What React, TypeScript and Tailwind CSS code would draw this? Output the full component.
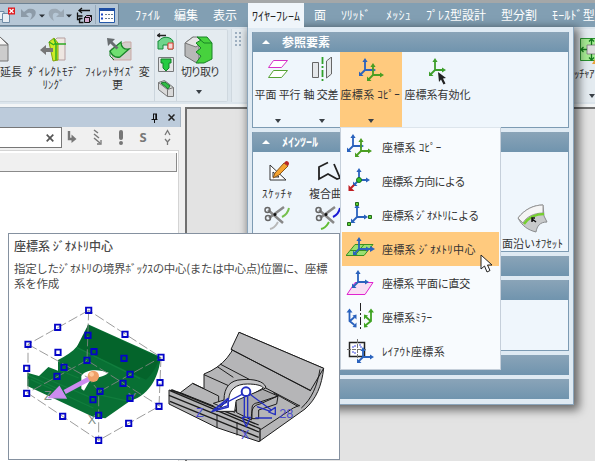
import React from "react";

/** Text run stretched to a target advance width through letter spacing. */
function T({ s, w, fs = 12, lh = "leading-[16px]", className = "" }: { s: string; w: number; fs?: number; lh?: string; className?: string }) {
  const chars = Array.from(s);
  const natural = chars.reduce((sum, c) => {
    if (c === " ") return sum + fs * 0.224;
    if (c === "(" || c === ")") return sum + fs * 0.34;
    const code = c.charCodeAt(0);
    return sum + (code >= 0xff61 && code <= 0xff9f ? fs * 0.5 : fs);
  }, 0);
  return (
    <span
      className={"whitespace-pre block " + lh + " " + className}
      style={{ fontSize: fs, width: w + 1, letterSpacing: (w - natural) / chars.length }}
    >
      {s}
    </span>
  );
}

const Caret = ({ className = "" }: { className?: string }) => (
  <svg width="6" height="4" viewBox="0 0 6 4" className={className}>
    <path d="M0 0h6L3 4z" fill="#3a4046" />
  </svg>
);

function Axes({ x, y, c = "#2a62bd", diag = c, up = 12 }: { x: number; y: number; c?: string; diag?: string; up?: number }) {
  return (
    <g transform={`translate(${x} ${y})`} fill="none" strokeWidth="1.8">
      <path d="M0 0L-5 5" stroke={diag} />
      <path d="M-6 6v-4.500l4.500 4.500z" fill={diag} />
      <path d={`M0 .9V${-up + 2}M-.9 0H9`} stroke={c} />
      <path d={`M0 ${-up}l-2.600 4h5.200zM11 0l-4-2.600v5.200z`} fill={c} />
    </g>
  );
}

const CopyAxes = () => (
  <svg width="26" height="26" viewBox="0 0 26 26">
    <Axes x={7} y={13} />
    <Axes x={15} y={18} c="#4a9e22" />
  </svg>
);

function Header({ title, w }: { title?: string; w?: number }) {
  return (
    <div className="h-[20px] shrink-0 flex items-center pl-[9px] bg-linear-to-b from-[#8aa4b8] to-[#7094ae] text-white font-bold">
      {title && (
        <>
          <svg width="8" height="4" viewBox="0 0 8 4" className="mr-[12px]">
            <path d="M0 4L4 0l4 4z" fill="#fff" />
          </svg>
          <T s={title} w={w!} />
        </>
      )}
    </div>
  );
}

function TitleBar() {
  return (
    <div className="h-[24px] bg-[#829fb3] flex items-center">
      <div className="w-[119px] h-[23px] -mt-px bg-[#b6c7d6] border border-l-0 border-[#6d8294] rounded-r-[2px] shrink-0">
        <svg width="118" height="21" viewBox="0 4 118 21">
          <g fill="#e8eef4" stroke="#6e8ba5">
            <path d="M-2 11.500h6v8h-6z" />
            <path d="M2.500 13.500h7v9h-7z" />
          </g>
          <rect x="8" y="7.500" width="7" height="7" fill="#e0191d" />
          <path d="M9.500 9l4 4m0-4l-4 4" stroke="#fff" strokeWidth="1.300" />
          <path d="M21 9v8h8l-3-3c5-3 8 0 4 6 8-4 8-13-2-11l-4 3z" fill="#8d9ba8" />
          <path d="M64 9v8h-8l3-3c-5-3-8 0-5 7-8-5-7-14 3-12l4 3z" fill="#9ba8b4" />
          <path d="M39 14.500h6l-3 3zM66 14.500h6l-3 3z" fill="#2c3238" />
          <g stroke="#111" fill="none">
            <path d="M79 10.500h11M82 8l-3 2.500 3 2.500M77.500 12.500v7h3M77.500 16h5M82.500 18.500h-3v4h4" strokeWidth="1.300" />
            <path d="M84.500 17.500l2-2h5v5l-2 2h-5z" fill="#d5a9cf" />
            <path d="M84.500 17.500h5v5m0-5l2-2" />
          </g>
          <path d="M95.500 5v19" stroke="#97a9ba" />
          <path d="M99.500 8.500h15v14h-15z" fill="#fff" stroke="#2358a8" />
          <path d="M99 8h16v3h-16z" fill="#1e4da2" />
          <path d="M101 14.500h2m-2 4h2" stroke="#1d49c8" strokeWidth="2" />
          <path d="M105 14.500h8m-8 4h8" stroke="#6b7d91" strokeDasharray="2 1" />
        </svg>
      </div>
      <div className="flex items-center text-white h-full pl-[16px]">
        <T s="ﾌｧｲﾙ" w={25} className="mr-[13px]" />
        <T s="編集" w={24} className="mr-[14px]" />
        <T s="表示" w={24} className="mr-[10px]" />
        <div className="w-[56px] h-full shrink-0 mr-[10px]" />
        <T s="面" w={12} className="mr-[14px]" />
        <T s="ｿﾘｯﾄﾞ" w={29} className="mr-[15px]" />
        <T s="ﾒｯｼｭ" w={25} className="mr-[14px]" />
        <T s="ﾌﾟﾚｽ型設計" w={60} className="mr-[14px]" />
        <T s="型分割" w={36} className="mr-[14px]" />
        <T s="ﾓｰﾙﾄﾞ型" w={43} />
      </div>
    </div>
  );
}

function Ribbon() {
  return (
    <div className="h-[77px] bg-[#dce5ec] flex pt-[2px] text-[#333]">
      <div className="w-[228px] h-[73px] border border-l-0 border-[#cfd8df] rounded-r-[2px] bg-[#e4ebf0] flex shrink-0">
        <div className="w-[26px] pt-[5px]">
          <svg width="12" height="30" viewBox="0 0 12 30">
            <path d="M-6 10L0 2l8 7v17h-14z" fill="#ccc" stroke="#777" />
            <path d="M-6 10h14L0 2z" fill="#f6f6f6" stroke="#777" />
          </svg>
          <T s="延長" w={22} fs={11} lh="leading-[13px]" />
        </div>
        <div className="w-[56px] flex flex-col items-center pt-[6px]">
          <svg width="28" height="28" viewBox="0 0 28 28">
            <path d="M12 7l5-5h8v22h-8z" fill="#eee6e1" stroke="#b59fa0" />
            <path d="M9 6l5-4 4 5v17l-5 1z" fill="#cdec27" stroke="#83a30e" />
            <path d="M14 3l2 5v16M14 8h12M9 6l5 3" stroke="#2bab22" fill="none" strokeWidth="1.400" />
            <path d="M0 14l6-5v3h7v4H6v3z" fill="#777" />
          </svg>
          <T s="ﾀﾞｲﾚｸﾄﾓﾃﾞ" w={52} fs={11} lh="leading-[13px]" className="mt-px" />
          <T s="ﾘﾝｸﾞ" w={22} fs={11} lh="leading-[13px]" />
        </div>
        <div className="w-[72px] flex flex-col items-center pt-[6px]">
          <svg width="28" height="28" viewBox="0 0 28 28">
            <path d="M7 13l14-7h6v18H9z" fill="#d4cecc" stroke="#c9a9a5" />
            <path d="M6 15l11-9c0 5 3 8 8 7l-9 8c-5 1-8-1-10-6z" fill="#70df70" stroke="#188327" strokeWidth="1.300" />
            <path d="M6 15v5l4 4" stroke="#188327" fill="none" />
            <path d="M3 2l8 1-2.500 2.500 6 6-2 2-6-6L4 10z" fill="#686d70" />
          </svg>
          <T s="ﾌｨﾚｯﾄｻｲｽﾞ 変" w={65} fs={11} lh="leading-[13px]" className="mt-px" />
          <T s="更" w={11} fs={11} lh="leading-[13px]" />
        </div>
        <div className="w-[23px] border-x border-[#cbd5dd] pt-[3px] flex flex-col items-center">
          <svg width="18" height="66" viewBox="0 0 18 66" fill="none">
            <path d="M2 8c3-5 11-5 14 0v8h-5v-4H6v4H1V8z" fill="#6fd48b" stroke="#168a39" />
            <path d="M11 10h5v6h-5z" fill="#f3d9d6" stroke="#e43b34" />
            <path d="M1 2.500h8M3 .5l-2.500 2L3 4" stroke="#222" strokeWidth="1.300" />
            <path d="M1.500 24.500h15v14h-15z" fill="#e5e6e7" stroke="#77797b" />
            <path d="M4 26h10v4h-2v5l-3 3-3-3v-5H4z" fill="#25cc42" stroke="#128128" />
            <path d="M1.500 49.500l6-2 9 7v9h-6l-9-7z" fill="#d9d9d9" stroke="#777" />
            <path d="M4 50l4-1 5 4-2 3z" fill="#31bf44" stroke="#177529" />
            <path d="M1.500 49.500l9 7v7m0-7l6-2" stroke="#777" />
          </svg>
        </div>
        <div className="w-[49px] flex flex-col items-center pt-[6px] pr-[5px]">
          <svg width="30" height="28" viewBox="0 0 30 28">
            <path d="M1 7l8-6 6 4v22l-4-1L1 20z" fill="#b8b8b8" stroke="#6f7172" />
            <path d="M1 7l11 4 8-6-7-4H9z" fill="#e4e4e4" stroke="#777" />
            <path d="M13 1h10l5 6v16l-8 4h-8l5-7-5-4 5-4-5-5 5-3z" fill="#47d23d" stroke="#188327" />
            <path d="M13 1l7 6h8" stroke="#188327" fill="none" />
          </svg>
          <T s="切り取り" w={38} fs={11} lh="leading-[13px]" className="mt-px ml-[3px]" />
          <Caret className="mt-[12px]" />
        </div>
      </div>
      <div className="w-[20px] h-[73px] ml-[3px] bg-[#e4ebf0] border-l border-[#cfd8df] shrink-0">
        <svg width="14" height="20" viewBox="0 0 14 20" fill="#9fb0c1">
          {[3, 7, 11, 15].map((y) => (
            <path key={y} d={`M3 ${y}h2v2h-2zM7 ${y}h2v2h-2z`} />
          ))}
        </svg>
      </div>
      <div className="grow bg-[#e4ebf0] h-[73px] flex flex-col items-end pt-[9px] overflow-hidden">
        <svg width="15" height="27" viewBox="0 0 15 27">
          <path d="M.5.500H20v22H.500z" fill="#a6eb93" stroke="#2a922f" />
          <path d="M7 7h10v9H7z" fill="#ddd" stroke="#888" />
          <path d="M1 11.500h6M3.500 9L1 11.500 3.500 14M11.500 1v6M9 3.500L11.500 1 14 3.500M11.500 16v6M9 19.500l2.500 2.500 2.500-2.500" stroke="#167a1d" fill="none" strokeWidth="1.300" />
          <path d="M12 26l3-5v5z" fill="#e8a13a" />
        </svg>
        <T s="ｯﾁｬｱ" w={20} fs={11} lh="leading-[13px]" className="mt-[2px]" />
        <Caret className="mt-[14px]" />
      </div>
    </div>
  );
}

function SidePanel() {
  return (
    <div className="w-[181px] flex flex-col shrink-0">
      <div className="h-[20px] bg-[#bccbdb] border-t border-r border-[#a6b4c2] flex items-center justify-end pr-[5px] gap-[9px]">
        <svg width="8" height="10" viewBox="0 0 8 10" fill="none" stroke="#111">
          <path d="M2 1h4M2.500 1v5M5.500 1v5M4.800 1v5M.5 6.500h6M3.500 7v3" />
        </svg>
        <svg width="7" height="7" viewBox="0 0 7 7" stroke="#222" strokeWidth="1.500">
          <path d="M.5.500l6 6m0-6l-6 6" />
        </svg>
      </div>
      <div className="h-[23px] flex items-start">
        <div className="w-[62px] h-[21px] bg-white border border-l-0 border-[#777] flex items-center justify-end pr-[7px]">
          <svg width="8" height="8" viewBox="0 0 8 8" stroke="#555" strokeWidth="1.700">
            <path d="M.7.700l6.600 6.600m0-6.600L.7 7.300" />
          </svg>
        </div>
        <svg width="118" height="22" viewBox="62 127 118 22" fill="none" stroke="#777" strokeWidth="2">
          <path d="M69 131v8h4" strokeWidth="2.400" />
          <path d="M71.500 134.500l5 4.500-5 4z" fill="#777" stroke="none" />
          <path d="M94 130l4 3m-4 1l5 4m-5 0l6 5" strokeWidth="1.500" />
          <path d="M97 144h4v-4" strokeWidth="1.300" />
          <path d="M121 132v6" strokeWidth="4" strokeLinecap="round" />
          <circle cx="121" cy="143" r="1" />
          <path d="M165 135l2.500-4.500 2.500 4.500M165 139l2.500 3 2.500-3M167.500 141v4" strokeWidth="1.300" />
          <text x="139.500" y="142" fontSize="13" fontWeight="bold" fill="#777" stroke="none" fontFamily="Open Sans">S</text>
        </svg>
      </div>
      <div className="grow w-[179px] bg-white border-t border-r border-[#d4d4d4] pt-[2px]">
        <div className="w-[177px] h-[19px] bg-[#f0f0f0] border-r border-b border-[#8a8a8a]" />
      </div>
    </div>
  );
}

function Tool({ icon, label, w, caret, className = "" }: { icon: React.ReactNode; label: string; w: number; caret?: boolean; className?: string }) {
  return (
    <div className={"flex flex-col items-center h-full pt-[5px] shrink-0 " + className}>
      <div className="h-[29px]">{icon}</div>
      <T s={label} w={w} fs={11} />
      {caret && <Caret className="mt-[17px]" />}
    </div>
  );
}

const Scissors = ({ a, b }: { a: string; b: string }) => (
  <svg width="28" height="26" viewBox="0 0 28 26" fill="none">
    <path d="M6 24c5-1 6-4 8-7" stroke={a} strokeWidth="2" />
    <path d="M18 12c4-2 6-4 7-9" stroke={b} strokeWidth="2" />
    <path d="M4 5l15 13M20 2L5 13" stroke="#888" strokeWidth="2.500" />
    <circle cx="3.500" cy="5" r="2.500" stroke="#666" strokeWidth="1.500" />
    <circle cx="4" cy="13" r="2.500" stroke="#666" strokeWidth="1.500" />
    <circle cx="11" cy="9.500" r="1.500" fill="#111" />
  </svg>
);

function Popup() {
  return (
    <div className="absolute left-[247px] top-[27px] w-[327px] h-[378px] bg-[#dfeaf3] border border-t-0 border-[#8ba5bb] shadow-[3px_3px_9px_2px_rgba(0,0,0,0.55)] px-[4px] pt-[5px] flex flex-col text-[#333]">
      <div className="h-[96px] border border-t-0 border-[#7d9bb3] bg-[#eff6fc] flex flex-col">
        <Header title="参照要素" w={48} />
        <div className="flex grow">
          <Tool
            caret
            label="平面 平行"
            w={46}
            className="w-[50px]"
            icon={
              <svg width="24" height="24" viewBox="0 0 24 24" fill="#fff">
                <path d="M7.500 3.500h14l-6 7h-13z" stroke="#d630c8" />
                <path d="M7.500 13.500h14l-6 7h-13z" stroke="#55a233" />
              </svg>
            }
          />
          <Tool
            caret
            label="軸 交差"
            w={35}
            className="w-[37px]"
            icon={
              <svg width="24" height="26" viewBox="0 0 24 26" fill="#e4e7ea" stroke="#666">
                <path d="M2.500 5.500h6v15h-6zM16.500 4l5-4v17l-5 4z" />
                <path d="M12.500 0v24" stroke="#31a029" strokeWidth="1.800" strokeDasharray="7 2 2 2" />
              </svg>
            }
          />
          <Tool caret label="座標系 ｺﾋﾟｰ" w={60} className="w-[62px] bg-[#ffca7e]" icon={<CopyAxes />} />
          <Tool
            label="座標系有効化"
            w={66}
            className="w-[72px]"
            icon={
              <svg width="28" height="28" viewBox="0 0 28 28">
                <Axes x={11} y={13} c="#3d9e2b" />
                <path d="M14 15l8 6-3 .5 2.500 5-2 1-2.500-5-2 2.500z" fill="#222" />
              </svg>
            }
          />
        </div>
      </div>
      <div className="h-[120px] mt-[4px] border border-t-0 border-[#7d9bb3] bg-[#eff6fc] shrink-0 flex flex-col">
        <Header title="ﾒｲﾝﾂｰﾙ" w={36} />
        <div className="flex grow pt-[5px]">
          <div className="w-[50px] flex flex-col items-center pt-[3px]">
            <svg width="24" height="25" viewBox="0 0 24 25" className="shrink-0">
              <path d="M4 5v15h16z" fill="#fff" stroke="#333" />
              <path d="M7 12v5h6z" fill="none" stroke="#333" />
              <path d="M7 18l2-5L18 3l4 3-9 9z" fill="#f5a430" stroke="#8b561c" />
              <path d="M18 3l2-2q3 0 3 3l-1 2z" fill="#b92525" />
            </svg>
            <T s="ｽｹｯﾁｬ" w={31} fs={11} />
            <div className="mt-[4px]"><Scissors a="#b8b8b8" b="#76c04d" /></div>
          </div>
          <div className="w-[52px] flex flex-col items-center pt-[3px]">
            <svg width="26" height="25" viewBox="0 0 26 25" className="shrink-0">
              <path d="M12 2.500L3 7v12l9-5 9 5 3-1-6-14" fill="none" stroke="#222" strokeWidth="1.800" />
            </svg>
            <T s="複合曲線" w={44} fs={11} className="ml-[5px]" />
            <div className="mt-[4px]"><Scissors a="#61bd35" b="#1a1ad6" /></div>
          </div>
          <div className="grow" />
          <div className="w-[67px] flex flex-col items-center pt-[47px] pr-[3px]">
            <svg width="32" height="30" viewBox="0 0 32 30" className="shrink-0">
              <path d="M1 14C8 5 17 1 26 1l1 11 3 6c-7 0-10 4-11 10C11 26 5 22 1 14z" fill="#c8cacb" stroke="#898b8d" />
              <path d="M1 14C8 5 17 1 26 1v8C17 9 9 13 6 19z" fill="#f5f5f5" stroke="#999" />
              <path d="M7 20c5-7 11-10 20-10" stroke="#75cf2f" strokeWidth="2.500" fill="none" />
              <path d="M19 18l-4-3m0 3v-4h3" stroke="#111" strokeWidth="1.500" fill="none" />
            </svg>
            <T s="面沿いｵﾌｾｯﾄ" w={61} fs={11} className="mt-[1px]" />
          </div>
        </div>
      </div>
      <div className="mt-[4px] shrink-0"><Header /></div>
      <div className="mt-[4px] h-[71px] border border-t-0 border-[#7d9bb3] bg-[#eff6fc] shrink-0"><Header /></div>
      <div className="mt-[4px] shrink-0"><Header /></div>
      <div className="mt-[4px] shrink-0"><Header /></div>
    </div>
  );
}

const Node = ({ x, y }: { x: number; y: number }) => (
  <path d={`M${x - 1.5} ${y - 1.5}h3v3h-3z`} fill="#5ed136" stroke="#226b1b" />
);

const menu: { label: string; w: number; icon: React.ReactNode; on?: boolean }[] = [
  { label: "座標系 ｺﾋﾟｰ", w: 60, icon: <><Axes x={7} y={13} /><Axes x={15} y={18} c="#4a9e22" up={13} /></> },
  { label: "座標系 方向による", w: 83, icon: <><Axes x={13} y={13} diag="#2a62bd" /><path d="M8 18l-3 3" stroke="#c01e23" strokeWidth="2" /><path d="M2.500 24v-6l6 6z" fill="#c01e23" /><circle cx="13" cy="13" r="2.500" fill="#35c42e" stroke="#16701a" /></> },
  { label: "座標系 ｼﾞｵﾒﾄﾘによる", w: 97, icon: <><Axes x={11} y={16} up={13} /><Node x={11} y={3} /><Node x={24} y={16} /><Node x={3} y={23} /></> },
  { label: "座標系 ｼﾞｵﾒﾄﾘ中心", w: 94, on: true, icon: <><path d="M9 9.500h18l-9 11H0z" fill="#9be070" stroke="#3b8f20" /><path d="M4 15.500h18M18 9.500l-9 11" stroke="#3b8f20" /><Axes x={13} y={14} up={12} /><path d="M22 14h3" stroke="#2a62bd" strokeWidth="2" /><path d="M24 11l5 3-5 3z" fill="#2a62bd" /></> },
  { label: "座標系 平面に直交", w: 88, icon: <><path d="M9 13.500h18l-8 12H1z" fill="#f8def3" stroke="#e023cf" /><Axes x={12} y={13} /></> },
  { label: "座標系ﾐﾗｰ", w: 50, icon: <><path d="M14.500 0v28" stroke="#222" strokeDasharray="8 2 2 2" /><path d="M3.500 8v10l5 4M4 18l4.500-4" stroke="#2a62bd" strokeWidth="1.800" fill="none" /><path d="M.5 9.500l3-4 3 4zM10.500 11.500v5l-4-4zM10.500 24.500v-5l-4 4.500z" fill="#2a62bd" /><path d="M25 8v10l-5 4m4.500-4l-4.500-4" stroke="#3fa322" strokeWidth="1.800" fill="none" /><path d="M28 9.500l-3-4-3 4zM18 11.500v5l4-4zM18 24.500v-5l4 4.500z" fill="#3fa322" /></> },
  { label: "ﾚｲｱｳﾄ座標系", w: 63, icon: <><path d="M3.500 5.500h15v14h-15z" fill="#fff" stroke="#222" strokeWidth="1.500" /><path d="M1 12.500h20M11.500 2v20" stroke="#777" strokeDasharray="4 1" /><path d="M6 10h3V7m5 0v3h3M6 15h3v3" stroke="#3e4ae0" fill="none" strokeDasharray="2 1" /><Axes x={17} y={20} up={10} /></> },
];

function Menu() {
  return (
    <div className="absolute left-[340px] top-[127px] w-[161px] h-[243px] bg-[#f8fbfe] border border-[#c5cfda] border-t-[#dde5ec] px-px pt-[2px] text-[#333]">
      {menu.map((m) => (
        <div key={m.label} className={"h-[34px] flex items-center pl-[4px] pb-px " + (m.on ? "bg-[#ffca7e]" : "")}>
          <svg width="29" height="28" viewBox="0 0 29 28" className="mr-[7px] shrink-0">{m.icon}</svg>
          <T s={m.label} w={m.w} fs={11} />
        </div>
      ))}
    </div>
  );
}

const handles = [
  [206, 31], [113, 82], [24, 133], [20, 205], [20, 280], [128, 349], [236, 421], [326, 370], [417, 319], [420, 248], [423, 172], [315, 103],
  [204, 106], [114, 157], [222, 155], [201, 181], [132, 202], [111, 229], [312, 175], [330, 223], [309, 250], [330, 295], [240, 274], [219, 299], [236, 346],
];

const PartsArt = () => (
  <svg width="331" height="159" viewBox="27 900 993 477" fill="none">
    <g transform="translate(60 900)">
      <path d="M204 73l218 98c-4 50-27 112-92 132l-74 52-36-4L22 258v-40l35 10 28-27 29 11v-32c47-21 78-55 90-107z" fill="#087034" />
      <path d="M204 75l214 98c-7 24-20 48-40 66L170 142z" fill="#04642b" />
      <path d="M24 226l88 40m-80-28l188 86M60 228l160 68m-104-86l60 24m60 50l90 20M170 142l190 94" stroke="#117d3d" strokeWidth="4" />
      <path d="M184 228c10-20 52-22 82-10-10 8-18 10-24 12l-30 8-20 34-8-6z" fill="#fff" />
      <path d="M206 31L24 133v147l212 141 181-102 6-147zM24 133l180 100 32 40v148M206 31l-5 150 219 138M201 181L20 280M240 274l183-102" stroke="#888" strokeWidth="2.500" strokeDasharray="30 9" />
      <g fill="#7c8c86" fontFamily="Liberation Sans" fontSize="38">
        <text x="72" y="299">Z</text>
        <text x="203" y="371">X</text>
        <text x="324" y="306" fill="#77a">Y</text>
      </g>
      <path d="M214 233l-80 43" stroke="#cc8cf0" strokeWidth="14" />
      <path d="M86 293l32-33 20 34z" fill="#cc8cf0" stroke="#cc8cf0" strokeWidth="4" />
      <circle cx="220" cy="229" r="17" fill="#f0a068" />
      <circle cx="215" cy="223" r="7" fill="#ffc99b" />
      {handles.map(([x, y]) => (
        <path key={`${x}-${y}`} d={`M${x - 8} ${y - 8}h16v16h-16z`} stroke="#0404c8" strokeWidth="5.500" />
      ))}
    </g>
    <g transform="translate(480 960)" stroke="#1c1c1c" strokeWidth="3" strokeLinejoin="round">
      <path d="M237 37l254 108c-6 52-22 92-56 122L297 365l-126-42L27 252v-42l34 8 37-28 34 16v-44c58-22 92-66 105-125z" fill="#b5b5b7" />
      <path d="M237 37l254 108-40 67L213 88z" fill="#bababc" />
      <path d="M480 148c-8 48-24 88-56 116M213 88l240 124M180 132l240 126M172 140l48 32M132 164l76 34M61 218l100 40M98 190l78 38v18" />
      <path d="M30 212l270 114v38M27 226l270 110M30 244l266 108M34 209l262 106" strokeWidth="4" />
      <path d="M171 282v42M231 306v40" />
      <path d="M192 240c0-38 18-60 54-61 34-3 65 4 72 23l-24 18-54 24-16 33-64-27z" fill="#c5c5c7" />
      <path d="M206 238c2-30 22-46 56-46 25 0 44 4 48 12l-48 28-34 14-4 28-55 0z" fill="#fff" />
      <path d="M228 242l80-34 46 20-54 24c-24 4-26 20-26 48l-44-22z" fill="#ababad" />
      <path d="M276 296v-30c0-14 8-16 18-18l60-20-4 24-54 18v26zM300 330l100-66 18-8M340 218l75 42" />
      <g stroke="#2530c0" strokeWidth="4">
        <circle cx="258" cy="215" r="13" strokeWidth="6" />
        <path d="M253 231v60m10-60v60M247 292h24l-12 28zM246 223l-84 44m42-32v22l-44 14zM270 223l65 48M286 294h50m-45-34l40 14" />
        <path d="M155 275l50-38v24zM326 276l20-14v22z" />
      </g>
      <g fill="#4a4dce" stroke="none" fontFamily="Liberation Sans" fontSize="38">
        <text x="108" y="290">Z</text>
        <text x="243" y="358">X</text>
        <text x="358" y="293">28</text>
      </g>
    </g>
  </svg>
);

function Tooltip() {
  return (
    <div className="absolute left-[8px] top-[233px] w-[332px] h-[227px] bg-white border border-[#8591a0] text-[#4a4a4a] overflow-hidden">
      <div className="pl-[5px] pt-[4px] h-[66px]">
        <T s="座標系 ｼﾞｵﾒﾄﾘ中心" w={99} fs={12} className="font-medium" />
        <T s="指定したｼﾞｵﾒﾄﾘの境界ﾎﾞｯｸｽの中心(または中心点)位置に、座標" w={313} fs={11.5} className="mt-[7px]" lh="leading-[15px]" />
        <T s="系を作成" w={45} fs={11.5} lh="leading-[15px]" />
      </div>
      <PartsArt />
    </div>
  );
}

export default function App() {
  return (
    <div className="relative w-[595px] h-[461px] overflow-hidden bg-[#f0f0f0] flex flex-col font-['Noto_Sans_CJK_JP',sans-serif]">
      <div className="h-[3px] bg-[#a4a7a8] shrink-0" />
      <TitleBar />
      <Ribbon />
      <div className="h-[3px] bg-[#f3f5f6] shrink-0" />
      <div className="grow flex">
        <SidePanel />
        <div className="grow ml-[4px] bg-[#e3e3e3] border-t-2 border-l-2 border-[#707070]" />
      </div>
      <Popup />
      <div className="absolute left-[248px] top-[3px] w-[56px] h-[25px] bg-[#eff5fa] flex items-center pl-[4px] text-[#222]">
        <T s="ﾜｲﾔｰﾌﾚｰﾑ" w={48} />
      </div>
      <Menu />
      <Tooltip />
      <svg width="16" height="22" viewBox="0 0 16 22" className="absolute left-[480px] top-[254px]">
        <path d="M1 1v14l3.500-3 2.500 6 3-1.500-2.500-5.500H12z" fill="#fff" stroke="#222" />
      </svg>
    </div>
  );
}
